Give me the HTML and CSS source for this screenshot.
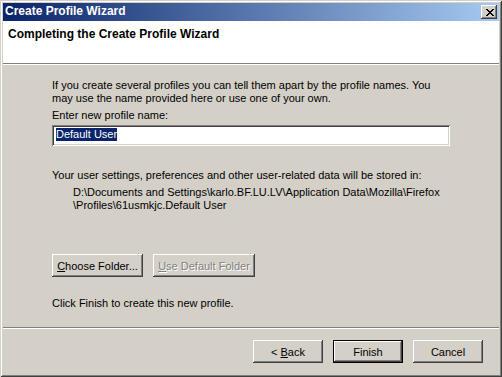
FILE: index.html
```html
<!DOCTYPE html>
<html lang="en">
<head>
    <meta charset="UTF-8">
    <meta name="viewport" content="width=device-width, initial-scale=1.0">
    <title>Create Profile Wizard</title>
    <link rel="stylesheet" href="styles.css">
</head>
<body>
    <div class="window">
        <div class="titlebar">
            <span class="title">Create Profile Wizard</span>
            <button type="button" class="close-btn" aria-label="Close">
                <svg width="8" height="7" viewBox="0 0 8 7" shape-rendering="crispEdges">
                    <path d="M0 0h2v1h-2z M6 0h2v1h-2z M1 1h2v1h-2z M5 1h2v1h-2z M2 2h4v1h-4z M3 3h2v1h-2z M2 4h4v1h-4z M1 5h2v1h-2z M5 5h2v1h-2z M0 6h2v1h-2z M6 6h2v1h-2z" fill="#000"/>
                </svg>
            </button>
        </div>

        <div class="header">
            <h1>Completing the Create Profile Wizard</h1>
        </div>
        <div class="etched"></div>

        <div class="content">
            <p class="intro">If you create several profiles you can tell them apart by the profile names. You may use the name provided here or use one of your own.</p>

            <label for="profileName" class="field-label">Enter new profile name:</label>
            <div class="textbox" id="profileName"><span class="selected">Default User</span></div>

            <p class="storage-note">Your user settings, preferences and other user-related data will be stored in:</p>
            <p class="path">D:\Documents and Settings\karlo.BF.LU.LV\Application Data\Mozilla\Firefox<br>\Profiles\61usmkjc.Default User</p>

            <div class="folder-buttons">
                <button type="button" class="btn btn-choose"><u>C</u>hoose Folder...</button>
                <button type="button" class="btn btn-default-folder" disabled><u>U</u>se Default Folder</button>
            </div>

            <p class="finish-note">Click Finish to create this new profile.</p>
        </div>
        <div class="etched"></div>

        <div class="footer">
            <button type="button" class="btn btn-nav">&lt; <u>B</u>ack</button>
            <button type="button" class="btn btn-nav btn-primary">Finish</button>
            <button type="button" class="btn btn-nav">Cancel</button>
        </div>
    </div>
</body>
</html>
```

FILE: styles.css
```css
* {
    margin: 0;
    padding: 0;
    box-sizing: border-box;
}

body {
    font-family: "Liberation Sans", Arial, sans-serif;
    font-size: 11px;
    line-height: 13px;
    color: #000;
    background: #d4d0c8;
}

.window {
    width: 502px;
    height: 377px;
    padding: 3px;
    display: flex;
    flex-direction: column;
    background: #d4d0c8;
    box-shadow:
        inset 1px 1px #d4d0c8,
        inset -1px -1px #404040,
        inset 2px 2px #ffffff,
        inset -2px -2px #808080;
}

/* title bar */
.titlebar {
    height: 18px;
    display: flex;
    align-items: flex-start;
    justify-content: space-between;
    padding-left: 2px;
    background: linear-gradient(90deg, #0a246a 0%, #a6caf0 100%);
}

.title {
    color: #fff;
    font-weight: bold;
    font-size: 12px;
    line-height: 17px;
}

.close-btn {
    width: 16px;
    height: 14px;
    margin: 2px 2px 0 0;
    border: none;
    display: flex;
    align-items: center;
    justify-content: center;
    padding-left: 1px;
    background: #d4d0c8;
    box-shadow:
        inset -1px -1px #404040,
        inset 1px 1px #ffffff,
        inset -2px -2px #808080;
}

/* white header */
.header {
    height: 42px;
    background: #fff;
    padding: 6px 0 0 5px;
}

.header h1 {
    font-size: 12px;
    font-weight: bold;
    line-height: 14px;
}

.etched {
    height: 2px;
    border-top: 1px solid #808080;
    border-bottom: 1px solid #ffffff;
}

/* main area */
.content {
    flex: 1;
    padding: 14px 0 0 49px;
}

.intro {
    width: 395px;
}

.field-label {
    display: block;
    margin-top: 4px;
}

.textbox {
    width: 398px;
    height: 21px;
    margin-top: 3px;
    padding: 3px 0 0 4px;
    background: #fff;
    box-shadow:
        inset 1px 1px #808080,
        inset -1px -1px #ffffff,
        inset 2px 2px #404040,
        inset -2px -2px #d4d0c8;
}

.selected {
    display: inline-block;
    background: #0a246a;
    color: #fff;
    height: 13px;
}

.storage-note {
    margin-top: 23px;
}

.path {
    margin-top: 4px;
    padding-left: 21px;
}

.folder-buttons {
    display: flex;
    gap: 10px;
    margin-top: 42px;
}

.finish-note {
    margin-top: 20px;
}

/* buttons */
.btn {
    height: 23px;
    border: none;
    font-family: inherit;
    font-size: 11px;
    color: #000;
    background: #d4d0c8;
    box-shadow:
        inset -1px -1px #404040,
        inset 1px 1px #ffffff,
        inset -2px -2px #808080,
        inset 2px 2px #d4d0c8;
}

.btn-choose {
    width: 91px;
}

.btn-default-folder {
    width: 102px;
}

.btn:disabled {
    color: #808080;
    text-shadow: 1px 1px #ffffff;
}

.footer {
    height: 45px;
    display: flex;
    justify-content: flex-end;
    gap: 10px;
    padding: 11px 16px 0 0;
}

.btn-nav {
    width: 70px;
}

.btn-primary {
    box-shadow:
        inset 1px 1px #000,
        inset -1px -1px #000,
        inset -2px -2px #404040,
        inset 2px 2px #ffffff,
        inset -3px -3px #808080;
}
```
